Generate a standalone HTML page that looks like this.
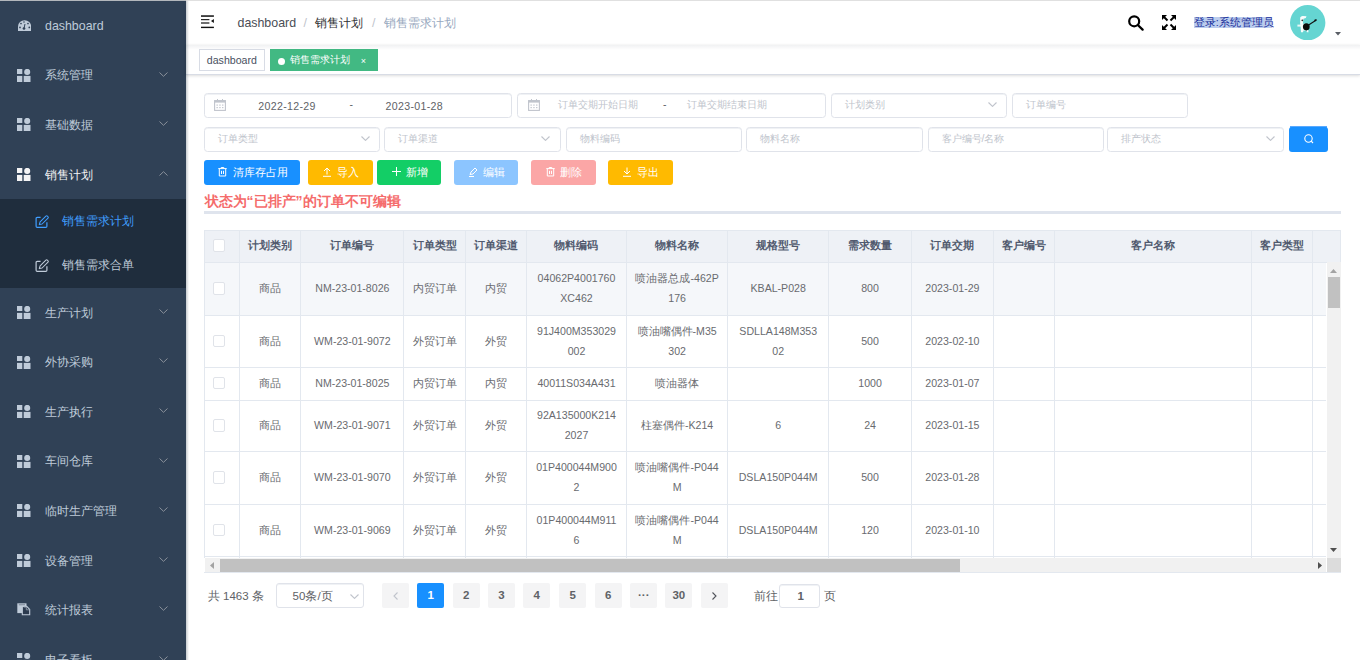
<!DOCTYPE html><html><head><meta charset="utf-8"><style>
*{box-sizing:border-box;margin:0;padding:0}
html,body{width:1360px;height:660px;overflow:hidden;background:#fff;font-family:"Liberation Sans", sans-serif;}
.abs{position:absolute}
.t{position:absolute;white-space:nowrap;line-height:1}
.sb{position:absolute;left:0;top:0;width:186px;height:660px;background:#304156;overflow:hidden}
.mi{position:absolute;left:0;width:186px}
.ico{position:absolute}
.inp{position:absolute;border:1px solid #e0e3ea;border-radius:3.5px;background:#fff;box-shadow:inset 0 1px 0 rgba(228,231,237,.55)}
.ph{position:absolute;white-space:nowrap;color:#c0c4cc;font-size:10.45px;line-height:1}
.dt{letter-spacing:.33px;font-size:10.6px}
.btn{position:absolute;border-radius:3px;color:#fff;font-size:10.6px}
.pg{position:absolute;top:583px;height:25px;width:26.8px;background:#f4f4f5;border-radius:2px;color:#606266;font-size:11.5px;font-weight:bold;text-align:center;line-height:25px}
.vl{position:absolute;width:1px;background:#e3e8ef}
.hl{position:absolute;height:1px;background:#e3e8ef}
.cell{position:absolute;display:flex;align-items:center;justify-content:center;text-align:center;color:#696b6f;font-size:10.6px;line-height:20.3px}
.hc{position:absolute;display:flex;align-items:center;justify-content:center;color:#515a6e;font-size:10.6px;font-weight:bold}
.cb{position:absolute;width:12.4px;height:12.4px;border:1px solid #e0e3e9;border-radius:2px;background:#fff}
</style></head><body>

<div class="sb">
<svg class="ico" style="left:17.5px;top:19.89px" width="13.2" height="11.4" viewBox="0 0 13.2 11.4"><path d="M0 11.3 V6.6 A6.6 6.4 0 0 1 13.2 6.6 V11.3 Z" fill="#bfcbd9"/><g fill="#304156"><circle cx="6" cy="2" r="0.75"/><circle cx="3" cy="3.5" r="0.85"/><circle cx="10" cy="3.5" r="0.85"/><circle cx="2" cy="7.4" r="0.85"/><circle cx="11.3" cy="7.4" r="0.85"/><circle cx="6" cy="8.5" r="1.35"/></g><path d="M6 8.5 L7 4" stroke="#304156" stroke-width="1"/></svg>
<div class="t" style="left:45px;top:20.29px;font-size:12.4px;color:#bfcbd9">dashboard</div>
<svg class="ico" style="left:17.3px;top:68.87px" width="14" height="13" viewBox="0 0 14 13"><rect x="0" y="0" width="5.3" height="5" fill="#bfcbd9"/><circle cx="10.2" cy="2.9" r="3.05" fill="#bfcbd9"/><rect x="0" y="6.9" width="5.3" height="6.1" fill="#bfcbd9"/><rect x="6.7" y="6.9" width="6.8" height="6.1" fill="#bfcbd9"/></svg>
<div class="t" style="left:45px;top:69.47px;font-size:12.4px;color:#bfcbd9">系统管理</div>
<svg class="ico" style="left:158.8px;top:71.57000000000001px" width="9" height="5" viewBox="0 0 9 5"><path d="M0.5 0.5 L4.5 4.3 L8.5 0.5" stroke="#8a919b" stroke-width="1" fill="none"/></svg>
<svg class="ico" style="left:17.3px;top:118.44999999999999px" width="14" height="13" viewBox="0 0 14 13"><rect x="0" y="0" width="5.3" height="5" fill="#bfcbd9"/><circle cx="10.2" cy="2.9" r="3.05" fill="#bfcbd9"/><rect x="0" y="6.9" width="5.3" height="6.1" fill="#bfcbd9"/><rect x="6.7" y="6.9" width="6.8" height="6.1" fill="#bfcbd9"/></svg>
<div class="t" style="left:45px;top:119.04999999999998px;font-size:12.4px;color:#bfcbd9">基础数据</div>
<svg class="ico" style="left:158.8px;top:121.14999999999999px" width="9" height="5" viewBox="0 0 9 5"><path d="M0.5 0.5 L4.5 4.3 L8.5 0.5" stroke="#8a919b" stroke-width="1" fill="none"/></svg>
<svg class="ico" style="left:17.3px;top:168.03px" width="14" height="13" viewBox="0 0 14 13"><rect x="0" y="0" width="5.3" height="5" fill="#f4f4f5"/><circle cx="10.2" cy="2.9" r="3.05" fill="#f4f4f5"/><rect x="0" y="6.9" width="5.3" height="6.1" fill="#f4f4f5"/><rect x="6.7" y="6.9" width="6.8" height="6.1" fill="#f4f4f5"/></svg>
<div class="t" style="left:45px;top:168.63px;font-size:12.4px;color:#f4f4f5">销售计划</div>
<svg class="ico" style="left:158.8px;top:170.73px" width="9" height="5" viewBox="0 0 9 5"><path d="M0.5 4.5 L4.5 0.7 L8.5 4.5" stroke="#8a919b" stroke-width="1" fill="none"/></svg>
<div class="abs" style="left:0;top:199.32px;width:186px;height:88.54px;background:#1f2d3d"></div>
<svg class="ico" style="left:34.5px;top:214.55499999999998px" width="14" height="14" viewBox="0 0 14 14"><path d="M5.6 2.3 H2.2 Q1.1 2.3 1.1 3.4 V11.3 Q1.1 12.4 2.2 12.4 H10.8 Q11.9 12.4 11.9 11.3 V7.3" stroke="#409eff" stroke-width="1.2" fill="none"/><path d="M4.3 9.6 L5.1 6.9 L10.9 1.1 Q11.6 0.5 12.4 1.2 L13 1.8 Q13.6 2.5 13 3.2 L7.1 9 Z" stroke="#409eff" stroke-width="1.05" fill="none" stroke-linejoin="round"/></svg>
<div class="t" style="left:62.4px;top:215.15499999999997px;font-size:12.4px;color:#409eff">销售需求计划</div>
<svg class="ico" style="left:34.5px;top:258.825px" width="14" height="14" viewBox="0 0 14 14"><path d="M5.6 2.3 H2.2 Q1.1 2.3 1.1 3.4 V11.3 Q1.1 12.4 2.2 12.4 H10.8 Q11.9 12.4 11.9 11.3 V7.3" stroke="#bfcbd9" stroke-width="1.2" fill="none"/><path d="M4.3 9.6 L5.1 6.9 L10.9 1.1 Q11.6 0.5 12.4 1.2 L13 1.8 Q13.6 2.5 13 3.2 L7.1 9 Z" stroke="#bfcbd9" stroke-width="1.05" fill="none" stroke-linejoin="round"/></svg>
<div class="t" style="left:62.4px;top:259.42499999999995px;font-size:12.4px;color:#bfcbd9">销售需求合单</div>
<svg class="ico" style="left:17.3px;top:306.15000000000003px" width="14" height="13" viewBox="0 0 14 13"><rect x="0" y="0" width="5.3" height="5" fill="#bfcbd9"/><circle cx="10.2" cy="2.9" r="3.05" fill="#bfcbd9"/><rect x="0" y="6.9" width="5.3" height="6.1" fill="#bfcbd9"/><rect x="6.7" y="6.9" width="6.8" height="6.1" fill="#bfcbd9"/></svg>
<div class="t" style="left:45px;top:306.75000000000006px;font-size:12.4px;color:#bfcbd9">生产计划</div>
<svg class="ico" style="left:158.8px;top:308.85px" width="9" height="5" viewBox="0 0 9 5"><path d="M0.5 0.5 L4.5 4.3 L8.5 0.5" stroke="#8a919b" stroke-width="1" fill="none"/></svg>
<svg class="ico" style="left:17.3px;top:355.73px" width="14" height="13" viewBox="0 0 14 13"><rect x="0" y="0" width="5.3" height="5" fill="#bfcbd9"/><circle cx="10.2" cy="2.9" r="3.05" fill="#bfcbd9"/><rect x="0" y="6.9" width="5.3" height="6.1" fill="#bfcbd9"/><rect x="6.7" y="6.9" width="6.8" height="6.1" fill="#bfcbd9"/></svg>
<div class="t" style="left:45px;top:356.33000000000004px;font-size:12.4px;color:#bfcbd9">外协采购</div>
<svg class="ico" style="left:158.8px;top:358.43px" width="9" height="5" viewBox="0 0 9 5"><path d="M0.5 0.5 L4.5 4.3 L8.5 0.5" stroke="#8a919b" stroke-width="1" fill="none"/></svg>
<svg class="ico" style="left:17.3px;top:405.31px" width="14" height="13" viewBox="0 0 14 13"><rect x="0" y="0" width="5.3" height="5" fill="#bfcbd9"/><circle cx="10.2" cy="2.9" r="3.05" fill="#bfcbd9"/><rect x="0" y="6.9" width="5.3" height="6.1" fill="#bfcbd9"/><rect x="6.7" y="6.9" width="6.8" height="6.1" fill="#bfcbd9"/></svg>
<div class="t" style="left:45px;top:405.91px;font-size:12.4px;color:#bfcbd9">生产执行</div>
<svg class="ico" style="left:158.8px;top:408.01px" width="9" height="5" viewBox="0 0 9 5"><path d="M0.5 0.5 L4.5 4.3 L8.5 0.5" stroke="#8a919b" stroke-width="1" fill="none"/></svg>
<svg class="ico" style="left:17.3px;top:454.89px" width="14" height="13" viewBox="0 0 14 13"><rect x="0" y="0" width="5.3" height="5" fill="#bfcbd9"/><circle cx="10.2" cy="2.9" r="3.05" fill="#bfcbd9"/><rect x="0" y="6.9" width="5.3" height="6.1" fill="#bfcbd9"/><rect x="6.7" y="6.9" width="6.8" height="6.1" fill="#bfcbd9"/></svg>
<div class="t" style="left:45px;top:455.49px;font-size:12.4px;color:#bfcbd9">车间仓库</div>
<svg class="ico" style="left:158.8px;top:457.59px" width="9" height="5" viewBox="0 0 9 5"><path d="M0.5 0.5 L4.5 4.3 L8.5 0.5" stroke="#8a919b" stroke-width="1" fill="none"/></svg>
<svg class="ico" style="left:17.3px;top:504.46999999999997px" width="14" height="13" viewBox="0 0 14 13"><rect x="0" y="0" width="5.3" height="5" fill="#bfcbd9"/><circle cx="10.2" cy="2.9" r="3.05" fill="#bfcbd9"/><rect x="0" y="6.9" width="5.3" height="6.1" fill="#bfcbd9"/><rect x="6.7" y="6.9" width="6.8" height="6.1" fill="#bfcbd9"/></svg>
<div class="t" style="left:45px;top:505.07px;font-size:12.4px;color:#bfcbd9">临时生产管理</div>
<svg class="ico" style="left:158.8px;top:507.16999999999996px" width="9" height="5" viewBox="0 0 9 5"><path d="M0.5 0.5 L4.5 4.3 L8.5 0.5" stroke="#8a919b" stroke-width="1" fill="none"/></svg>
<svg class="ico" style="left:17.3px;top:554.05px" width="14" height="13" viewBox="0 0 14 13"><rect x="0" y="0" width="5.3" height="5" fill="#bfcbd9"/><circle cx="10.2" cy="2.9" r="3.05" fill="#bfcbd9"/><rect x="0" y="6.9" width="5.3" height="6.1" fill="#bfcbd9"/><rect x="6.7" y="6.9" width="6.8" height="6.1" fill="#bfcbd9"/></svg>
<div class="t" style="left:45px;top:554.65px;font-size:12.4px;color:#bfcbd9">设备管理</div>
<svg class="ico" style="left:158.8px;top:556.75px" width="9" height="5" viewBox="0 0 9 5"><path d="M0.5 0.5 L4.5 4.3 L8.5 0.5" stroke="#8a919b" stroke-width="1" fill="none"/></svg>
<svg class="ico" style="left:17.3px;top:603.13px" width="14" height="13" viewBox="0 0 14 13"><rect x="0.3" y="0.3" width="9.2" height="9.8" fill="#bfcbd9"/><rect x="1.8" y="0.9" width="6.2" height="1.5" fill="#8e9aa9"/><path d="M5.3 3.4 H9.7 L12.7 6.4 V11.8 H5.3 Z" fill="#2b3a4f" stroke="#bfcbd9" stroke-width="1.1"/><path d="M6.7 4.1 H9.3 V6.8 H12.2" stroke="#8e9aa9" stroke-width="0.9" fill="none"/></svg>
<div class="t" style="left:45px;top:604.23px;font-size:12.4px;color:#bfcbd9">统计报表</div>
<svg class="ico" style="left:158.8px;top:606.33px" width="9" height="5" viewBox="0 0 9 5"><path d="M0.5 0.5 L4.5 4.3 L8.5 0.5" stroke="#8a919b" stroke-width="1" fill="none"/></svg>
<svg class="ico" style="left:17.3px;top:653.21px" width="14" height="13" viewBox="0 0 14 13"><rect x="0" y="0" width="5.3" height="5" fill="#bfcbd9"/><circle cx="10.2" cy="2.9" r="3.05" fill="#bfcbd9"/><rect x="0" y="6.9" width="5.3" height="6.1" fill="#bfcbd9"/><rect x="6.7" y="6.9" width="6.8" height="6.1" fill="#bfcbd9"/></svg>
<div class="t" style="left:45px;top:653.8100000000001px;font-size:12.4px;color:#bfcbd9">电子看板</div>
<svg class="ico" style="left:158.8px;top:655.9100000000001px" width="9" height="5" viewBox="0 0 9 5"><path d="M0.5 0.5 L4.5 4.3 L8.5 0.5" stroke="#8a919b" stroke-width="1" fill="none"/></svg>
</div>
<div class="abs" style="left:186px;top:1px;width:1174px;height:44.3px;background:#fff;box-shadow:0 1px 4px rgba(0,21,41,.08)"></div>
<svg class="ico" style="left:201.1px;top:15px" width="13" height="13.5" viewBox="0 0 13 13.5"><g fill="#111"><rect x="0" y="0.3" width="12.9" height="1.5"/><rect x="0" y="4.1" width="8.4" height="1.1"/><rect x="0" y="7.4" width="8.4" height="1.2"/><path d="M12.9 4 L10 6 L12.9 8Z"/><rect x="0" y="11.7" width="12.9" height="1.4"/></g></svg>
<div class="t" style="left:237.5px;top:17.3px;font-size:12.4px;color:#4a4d55">dashboard</div>
<div class="t" style="left:303.5px;top:17px;font-size:12.4px;color:#c0c4cc">/</div>
<div class="t" style="left:315.1px;top:16.8px;font-size:12.4px;color:#303133">销售计划</div>
<div class="t" style="left:372px;top:17px;font-size:12.4px;color:#c0c4cc">/</div>
<div class="t" style="left:383.6px;top:16.8px;font-size:12.4px;color:#97a8be">销售需求计划</div>
<svg class="ico" style="left:1128px;top:15px" width="17" height="16" viewBox="0 0 17 16"><circle cx="6.2" cy="6.3" r="5" stroke="#000" stroke-width="2.2" fill="none"/><path d="M9.8 10 L14.6 14.6" stroke="#000" stroke-width="2.3" stroke-linecap="round"/></svg>
<svg class="ico" style="left:1161.8px;top:15.3px" width="14" height="15" viewBox="0 0 14 15"><g fill="#000" stroke="#000"><path d="M0 0 H5 L0 5Z" stroke="none"/><path d="M1.5 1.5 L5.5 5.5" stroke-width="2" /><path d="M14 0 H9 L14 5Z" stroke="none"/><path d="M12.5 1.5 L8.5 5.5" stroke-width="2"/><path d="M0 15 H5 L0 10Z" stroke="none"/><path d="M1.5 13.5 L5.5 9.5" stroke-width="2"/><path d="M14 15 H9 L14 10Z" stroke="none"/><path d="M12.5 13.5 L8.5 9.5" stroke-width="2"/></g></svg>
<div class="abs" style="left:1193.8px;top:17px;width:78px;height:11px;background:#bccdee"></div>
<div class="t" style="left:1193.8px;top:17px;font-size:10.6px;color:#1a2f9a">登录:系统管理员</div>
<svg class="ico" style="left:1290.4px;top:4.5px" width="35.4" height="35.4" viewBox="0 0 35.4 35.4"><circle cx="17.7" cy="17.7" r="17.7" fill="#65d5d2"/>
<path d="M10.2 12.5 Q11 10.8 13 11 L16.5 11.2 L15.8 13 L13.5 13.8 L13.2 15.5 L12.8 19.5 L10.2 19.8 Z" fill="#f7fcfc"/>
<path d="M7.4 19.6 H12.5 V21.6 H7.4Z" fill="#e8f7f7"/>
<path d="M10.5 19.5 L15 18.5 L17.5 22 L16 25.5 L13.5 25.5 L13 27.3 L11 27.3 L10.8 24.5 Z" fill="#f7fcfc"/>
<path d="M16.5 25 L18.3 25 L18.5 27.3 L16.8 27.3Z" fill="#f7fcfc"/>
<circle cx="12.3" cy="15.3" r="0.9" fill="#333"/>
<ellipse cx="16.3" cy="21.8" rx="3.4" ry="3.6" fill="#0a0a0a"/><path d="M18.2 20.3 L26 15.2" stroke="#111" stroke-width="1.1"/><path d="M24.5 15.8 L26.6 14.6" stroke="#111" stroke-width="1.6"/></svg>
<svg class="ico" style="left:1335px;top:32px" width="6" height="3.5" viewBox="0 0 6 3.5"><path d="M0 0 H6 L3 3.5Z" fill="#5a5e66"/></svg>
<div class="abs" style="left:186px;top:45.3px;width:1174px;height:29.9px;background:#fff;border-bottom:1px solid #d8dce5;box-shadow:0 1px 3px 0 rgba(0,0,0,.12),0 0 3px 0 rgba(0,0,0,.04)"></div>
<div class="abs" style="left:199.3px;top:49px;width:65.5px;height:22.3px;border:1px solid #d8dce5;background:#fff"></div>
<div class="t" style="left:206.8px;top:55.2px;font-size:10.6px;color:#495060">dashboard</div>
<div class="abs" style="left:270px;top:49px;width:108px;height:22.3px;background:#42b983;border:1px solid #42b983"></div>
<div class="abs" style="left:277.5px;top:57.5px;width:7.2px;height:7.2px;border-radius:50%;background:#fff"></div>
<div class="t" style="left:289.6px;top:55.3px;font-size:10.3px;color:#fff">销售需求计划</div>
<div class="t" style="left:360.8px;top:57px;font-size:9px;color:#fff">×</div>
<div class="inp" style="left:204.2px;top:92.5px;width:308.3px;height:25.200000000000003px"></div>
<svg class="ico" style="left:213.8px;top:99px" width="12" height="12" viewBox="0 0 12 12"><rect x="0.6" y="1.6" width="10.8" height="9.8" stroke="#c0c4cc" stroke-width="1.1" fill="none"/><rect x="0.6" y="1.6" width="10.8" height="2" fill="#c0c4cc"/><g fill="#c0c4cc"><rect x="2.5" y="5.5" width="1.3" height="1.2"/><rect x="5.3" y="5.5" width="1.3" height="1.2"/><rect x="8.1" y="5.5" width="1.3" height="1.2"/><rect x="2.5" y="8" width="1.3" height="1.2"/><rect x="5.3" y="8" width="1.3" height="1.2"/><rect x="8.1" y="8" width="1.3" height="1.2"/></g><rect x="3" y="0" width="1" height="2.5" fill="#c0c4cc"/><rect x="8" y="0" width="1" height="2.5" fill="#c0c4cc"/></svg>
<div class="ph dt" style="left:258.3px;top:100.6px;color:#606266">2022-12-29</div>
<div class="ph" style="left:349.5px;top:100.4px;color:#606266">-</div>
<div class="ph dt" style="left:385.5px;top:100.6px;color:#606266">2023-01-28</div>
<div class="inp" style="left:517.2px;top:92.5px;width:308.79999999999995px;height:25.200000000000003px"></div>
<svg class="ico" style="left:528.4px;top:99px" width="12" height="12" viewBox="0 0 12 12"><rect x="0.6" y="1.6" width="10.8" height="9.8" stroke="#c0c4cc" stroke-width="1.1" fill="none"/><rect x="0.6" y="1.6" width="10.8" height="2" fill="#c0c4cc"/><g fill="#c0c4cc"><rect x="2.5" y="5.5" width="1.3" height="1.2"/><rect x="5.3" y="5.5" width="1.3" height="1.2"/><rect x="8.1" y="5.5" width="1.3" height="1.2"/><rect x="2.5" y="8" width="1.3" height="1.2"/><rect x="5.3" y="8" width="1.3" height="1.2"/><rect x="8.1" y="8" width="1.3" height="1.2"/></g><rect x="3" y="0" width="1" height="2.5" fill="#c0c4cc"/><rect x="8" y="0" width="1" height="2.5" fill="#c0c4cc"/></svg>
<div class="ph" style="left:558px;top:99.6px;color:#c0c4cc">订单交期开始日期</div>
<div class="ph" style="left:663px;top:99.6px;color:#606266">-</div>
<div class="ph" style="left:686.6px;top:99.6px;color:#c0c4cc">订单交期结束日期</div>
<div class="inp" style="left:830.8px;top:92.5px;width:176.70000000000005px;height:25.200000000000003px"></div>
<div class="ph" style="left:844.5px;top:99.6px;color:#c0c4cc">计划类别</div>
<svg class="ico" style="left:988px;top:102.3px" width="9" height="5" viewBox="0 0 9 5"><path d="M0.5 0.5 L4.5 4.4 L8.5 0.5" stroke="#c0c4cc" stroke-width="1.1" fill="none"/></svg>
<div class="inp" style="left:1011.9px;top:92.5px;width:175.89999999999998px;height:25.200000000000003px"></div>
<div class="ph" style="left:1026px;top:99.6px;color:#c0c4cc">订单编号</div>
<div class="inp" style="left:204px;top:126.5px;width:176.39999999999998px;height:25.099999999999994px"></div>
<div class="ph" style="left:218px;top:133.5px;color:#c0c4cc">订单类型</div>
<svg class="ico" style="left:360.8px;top:136.3px" width="9" height="5" viewBox="0 0 9 5"><path d="M0.5 0.5 L4.5 4.4 L8.5 0.5" stroke="#c0c4cc" stroke-width="1.1" fill="none"/></svg>
<div class="inp" style="left:384.4px;top:126.5px;width:176.80000000000007px;height:25.099999999999994px"></div>
<div class="ph" style="left:398.4px;top:133.5px;color:#c0c4cc">订单渠道</div>
<svg class="ico" style="left:541.2px;top:136.3px" width="9" height="5" viewBox="0 0 9 5"><path d="M0.5 0.5 L4.5 4.4 L8.5 0.5" stroke="#c0c4cc" stroke-width="1.1" fill="none"/></svg>
<div class="inp" style="left:565.7px;top:126.5px;width:176.19999999999993px;height:25.099999999999994px"></div>
<div class="ph" style="left:579.7px;top:133.5px;color:#c0c4cc">物料编码</div>
<div class="inp" style="left:745.8px;top:126.5px;width:176.9000000000001px;height:25.099999999999994px"></div>
<div class="ph" style="left:759.6px;top:133.5px;color:#c0c4cc">物料名称</div>
<div class="inp" style="left:927.7px;top:126.5px;width:175.89999999999986px;height:25.099999999999994px"></div>
<div class="ph" style="left:941.6px;top:133.5px;color:#c0c4cc">客户编号/名称</div>
<div class="inp" style="left:1107.3px;top:126.5px;width:177.0px;height:25.099999999999994px"></div>
<div class="ph" style="left:1121.3px;top:133.5px;color:#c0c4cc">排产状态</div>
<svg class="ico" style="left:1266px;top:136.3px" width="9" height="5" viewBox="0 0 9 5"><path d="M0.5 0.5 L4.5 4.4 L8.5 0.5" stroke="#c0c4cc" stroke-width="1.1" fill="none"/></svg>
<div class="abs" style="left:1290px;top:126.1px;width:36.8px;height:1.6px;background:#59a9ff"></div>
<div class="abs" style="left:1289.1px;top:127.2px;width:38.5px;height:24.4px;background:#1890ff;border-radius:3px"></div>
<svg class="ico" style="left:1303.5px;top:133.5px" width="10" height="10" viewBox="0 0 10 10"><circle cx="4.5" cy="4.5" r="3.7" stroke="#fff" stroke-width="1.1" fill="none"/><path d="M7.2 7.2 L9 9" stroke="#fff" stroke-width="1.1"/></svg>
<div class="btn" style="left:204.2px;top:159.7px;width:95.60000000000002px;height:25.5px;background:#1890ff"></div>
<svg class="ico" style="left:217.8px;top:167.3px" width="9" height="9.6" viewBox="0 0 9 9.6"><path d="M0.3 1.6 H8.7 M3.2 1.6 V0.5 H5.8 V1.6 M1.3 1.6 V9 H7.7 V1.6 M3.5 3.8 V7 M5.5 3.8 V7" stroke="#fff" stroke-width="1" fill="none"/></svg>
<div class="t" style="left:233.3px;top:166.8px;font-size:10.6px;color:#fff">清库存占用</div>
<div class="btn" style="left:308.3px;top:159.7px;width:64.39999999999998px;height:25.5px;background:#ffba00"></div>
<svg class="ico" style="left:323.3px;top:166.5px" width="8" height="10" viewBox="0 0 8 10"><path d="M0 9.3 H8 M4 7.5 V1 M1 4 L4 1 L7 4" stroke="#fff" stroke-width="1" fill="none"/></svg>
<div class="t" style="left:337.4px;top:166.8px;font-size:10.6px;color:#fff">导入</div>
<div class="btn" style="left:376.8px;top:159.7px;width:63.80000000000001px;height:25.5px;background:#13ce66"></div>
<svg class="ico" style="left:391.6px;top:167px" width="9" height="9" viewBox="0 0 9 9"><path d="M4.5 0 V9 M0 4.5 H9" stroke="#fff" stroke-width="1" fill="none"/></svg>
<div class="t" style="left:406.2px;top:166.8px;font-size:10.6px;color:#fff">新增</div>
<div class="btn" style="left:453.5px;top:159.7px;width:64.29999999999995px;height:25.5px;background:#8cc5ff"></div>
<svg class="ico" style="left:468.9px;top:166.5px" width="9" height="10" viewBox="0 0 9 10"><path d="M1 7.5 L2 5 L6 1 L8 3 L4 7 Z M0 9.5 H5" stroke="#fff" stroke-width="1" fill="none"/></svg>
<div class="t" style="left:483px;top:166.8px;font-size:10.6px;color:#fff">编辑</div>
<div class="btn" style="left:531.2px;top:159.7px;width:64.69999999999993px;height:25.5px;background:#fba6a6"></div>
<svg class="ico" style="left:545.5px;top:167.3px" width="9" height="9.6" viewBox="0 0 9 9.6"><path d="M0.3 1.6 H8.7 M3.2 1.6 V0.5 H5.8 V1.6 M1.3 1.6 V9 H7.7 V1.6 M3.5 3.8 V7 M5.5 3.8 V7" stroke="#fff" stroke-width="1" fill="none"/></svg>
<div class="t" style="left:560.3px;top:166.8px;font-size:10.6px;color:#fff">删除</div>
<div class="btn" style="left:608.3px;top:159.7px;width:64.40000000000009px;height:25.5px;background:#ffba00"></div>
<svg class="ico" style="left:623.3px;top:166.5px" width="8" height="10" viewBox="0 0 8 10"><path d="M0 9.3 H8 M4 0.5 V7 M1 4 L4 7 L7 4" stroke="#fff" stroke-width="1" fill="none"/></svg>
<div class="t" style="left:637.4px;top:166.8px;font-size:10.6px;color:#fff">导出</div>
<div class="t" style="left:204.5px;top:193.6px;font-size:14px;font-weight:bold;color:#f56c6c">状态为“已排产”的订单不可编辑</div>
<div class="abs" style="left:204px;top:211px;width:1137px;height:3px;background:#dfe4ed"></div>
<div class="abs" style="left:204.1px;top:230.1px;width:1136.7px;height:32.29999999999998px;background:#eef1f6"></div>
<div class="abs" style="left:204.1px;top:262.4px;width:1122.4px;height:53.10000000000002px;background:#f5f7fa"></div>
<div class="hl" style="left:204.1px;top:230.1px;width:1136.7px"></div>
<div class="hl" style="left:204.1px;top:261.9px;width:1136.7px"></div>
<div class="hl" style="left:204.1px;top:315.0px;width:1122.4px"></div>
<div class="hl" style="left:204.1px;top:366.8px;width:1122.4px"></div>
<div class="hl" style="left:204.1px;top:399.5px;width:1122.4px"></div>
<div class="hl" style="left:204.1px;top:451.3px;width:1122.4px"></div>
<div class="hl" style="left:204.1px;top:503.7px;width:1122.4px"></div>
<div class="hl" style="left:204.1px;top:556.0px;width:1122.4px"></div>
<div class="vl" style="left:203.6px;top:230.1px;height:327.9px"></div>
<div class="vl" style="left:239.0px;top:230.1px;height:327.9px"></div>
<div class="vl" style="left:300.4px;top:230.1px;height:327.9px"></div>
<div class="vl" style="left:403.3px;top:230.1px;height:327.9px"></div>
<div class="vl" style="left:464.8px;top:230.1px;height:327.9px"></div>
<div class="vl" style="left:525.8px;top:230.1px;height:327.9px"></div>
<div class="vl" style="left:626.2px;top:230.1px;height:327.9px"></div>
<div class="vl" style="left:727.1px;top:230.1px;height:327.9px"></div>
<div class="vl" style="left:828.3px;top:230.1px;height:327.9px"></div>
<div class="vl" style="left:910.8px;top:230.1px;height:327.9px"></div>
<div class="vl" style="left:993.0px;top:230.1px;height:327.9px"></div>
<div class="vl" style="left:1053.7px;top:230.1px;height:327.9px"></div>
<div class="vl" style="left:1251.4px;top:230.1px;height:327.9px"></div>
<div class="vl" style="left:1312.0px;top:230.1px;height:327.9px"></div>
<div class="vl" style="left:1339.8px;top:230.1px;height:342.4px"></div>
<div class="hl" style="left:204.1px;top:572px;width:1136.7px"></div>
<div class="hc" style="left:239.5px;top:230.1px;width:61.39999999999998px;height:32.29999999999998px">计划类别</div>
<div class="hc" style="left:300.9px;top:230.1px;width:102.90000000000003px;height:32.29999999999998px">订单编号</div>
<div class="hc" style="left:403.8px;top:230.1px;width:61.5px;height:32.29999999999998px">订单类型</div>
<div class="hc" style="left:465.3px;top:230.1px;width:60.99999999999994px;height:32.29999999999998px">订单渠道</div>
<div class="hc" style="left:526.3px;top:230.1px;width:100.40000000000009px;height:32.29999999999998px">物料编码</div>
<div class="hc" style="left:626.7px;top:230.1px;width:100.89999999999998px;height:32.29999999999998px">物料名称</div>
<div class="hc" style="left:727.6px;top:230.1px;width:101.19999999999993px;height:32.29999999999998px">规格型号</div>
<div class="hc" style="left:828.8px;top:230.1px;width:82.5px;height:32.29999999999998px">需求数量</div>
<div class="hc" style="left:911.3px;top:230.1px;width:82.20000000000005px;height:32.29999999999998px">订单交期</div>
<div class="hc" style="left:993.5px;top:230.1px;width:60.700000000000045px;height:32.29999999999998px">客户编号</div>
<div class="hc" style="left:1054.2px;top:230.1px;width:197.70000000000005px;height:32.29999999999998px">客户名称</div>
<div class="hc" style="left:1251.9px;top:230.1px;width:60.59999999999991px;height:32.29999999999998px">客户类型</div>
<div class="cb" style="left:212.8px;top:239.4px"></div>
<div class="cb" style="left:212.8px;top:282.25px"></div>
<div class="cell" style="left:239.5px;top:262.4px;width:61.39999999999998px;height:52.10000000000002px">商品</div>
<div class="cell" style="left:300.9px;top:262.4px;width:102.90000000000003px;height:52.10000000000002px">NM-23-01-8026</div>
<div class="cell" style="left:403.8px;top:262.4px;width:61.5px;height:52.10000000000002px">内贸订单</div>
<div class="cell" style="left:465.3px;top:262.4px;width:60.99999999999994px;height:52.10000000000002px">内贸</div>
<div class="cell" style="left:526.3px;top:262.4px;width:100.40000000000009px;height:52.10000000000002px">04062P4001760<br>XC462</div>
<div class="cell" style="left:626.7px;top:262.4px;width:100.89999999999998px;height:52.10000000000002px">喷油器总成-462P<br>176</div>
<div class="cell" style="left:727.6px;top:262.4px;width:101.19999999999993px;height:52.10000000000002px">KBAL-P028</div>
<div class="cell" style="left:828.8px;top:262.4px;width:82.5px;height:52.10000000000002px">800</div>
<div class="cell" style="left:911.3px;top:262.4px;width:82.20000000000005px;height:52.10000000000002px">2023-01-29</div>
<div class="cb" style="left:212.8px;top:334.7px"></div>
<div class="cell" style="left:239.5px;top:315.5px;width:61.39999999999998px;height:50.80000000000001px">商品</div>
<div class="cell" style="left:300.9px;top:315.5px;width:102.90000000000003px;height:50.80000000000001px">WM-23-01-9072</div>
<div class="cell" style="left:403.8px;top:315.5px;width:61.5px;height:50.80000000000001px">外贸订单</div>
<div class="cell" style="left:465.3px;top:315.5px;width:60.99999999999994px;height:50.80000000000001px">外贸</div>
<div class="cell" style="left:526.3px;top:315.5px;width:100.40000000000009px;height:50.80000000000001px">91J400M353029<br>002</div>
<div class="cell" style="left:626.7px;top:315.5px;width:100.89999999999998px;height:50.80000000000001px">喷油嘴偶件-M35<br>302</div>
<div class="cell" style="left:727.6px;top:315.5px;width:101.19999999999993px;height:50.80000000000001px">SDLLA148M353<br>02</div>
<div class="cell" style="left:828.8px;top:315.5px;width:82.5px;height:50.80000000000001px">500</div>
<div class="cell" style="left:911.3px;top:315.5px;width:82.20000000000005px;height:50.80000000000001px">2023-02-10</div>
<div class="cb" style="left:212.8px;top:376.95px"></div>
<div class="cell" style="left:239.5px;top:367.3px;width:61.39999999999998px;height:31.69999999999999px">商品</div>
<div class="cell" style="left:300.9px;top:367.3px;width:102.90000000000003px;height:31.69999999999999px">NM-23-01-8025</div>
<div class="cell" style="left:403.8px;top:367.3px;width:61.5px;height:31.69999999999999px">内贸订单</div>
<div class="cell" style="left:465.3px;top:367.3px;width:60.99999999999994px;height:31.69999999999999px">内贸</div>
<div class="cell" style="left:526.3px;top:367.3px;width:100.40000000000009px;height:31.69999999999999px">40011S034A431</div>
<div class="cell" style="left:626.7px;top:367.3px;width:100.89999999999998px;height:31.69999999999999px">喷油器体</div>
<div class="cell" style="left:828.8px;top:367.3px;width:82.5px;height:31.69999999999999px">1000</div>
<div class="cell" style="left:911.3px;top:367.3px;width:82.20000000000005px;height:31.69999999999999px">2023-01-07</div>
<div class="cb" style="left:212.8px;top:419.2px"></div>
<div class="cell" style="left:239.5px;top:400.0px;width:61.39999999999998px;height:50.80000000000001px">商品</div>
<div class="cell" style="left:300.9px;top:400.0px;width:102.90000000000003px;height:50.80000000000001px">WM-23-01-9071</div>
<div class="cell" style="left:403.8px;top:400.0px;width:61.5px;height:50.80000000000001px">外贸订单</div>
<div class="cell" style="left:465.3px;top:400.0px;width:60.99999999999994px;height:50.80000000000001px">外贸</div>
<div class="cell" style="left:526.3px;top:400.0px;width:100.40000000000009px;height:50.80000000000001px">92A135000K214<br>2027</div>
<div class="cell" style="left:626.7px;top:400.0px;width:100.89999999999998px;height:50.80000000000001px">柱塞偶件-K214</div>
<div class="cell" style="left:727.6px;top:400.0px;width:101.19999999999993px;height:50.80000000000001px">6</div>
<div class="cell" style="left:828.8px;top:400.0px;width:82.5px;height:50.80000000000001px">24</div>
<div class="cell" style="left:911.3px;top:400.0px;width:82.20000000000005px;height:50.80000000000001px">2023-01-15</div>
<div class="cb" style="left:212.8px;top:471.3px"></div>
<div class="cell" style="left:239.5px;top:451.8px;width:61.39999999999998px;height:51.39999999999998px">商品</div>
<div class="cell" style="left:300.9px;top:451.8px;width:102.90000000000003px;height:51.39999999999998px">WM-23-01-9070</div>
<div class="cell" style="left:403.8px;top:451.8px;width:61.5px;height:51.39999999999998px">外贸订单</div>
<div class="cell" style="left:465.3px;top:451.8px;width:60.99999999999994px;height:51.39999999999998px">外贸</div>
<div class="cell" style="left:526.3px;top:451.8px;width:100.40000000000009px;height:51.39999999999998px">01P400044M900<br>2</div>
<div class="cell" style="left:626.7px;top:451.8px;width:100.89999999999998px;height:51.39999999999998px">喷油嘴偶件-P044<br>M</div>
<div class="cell" style="left:727.6px;top:451.8px;width:101.19999999999993px;height:51.39999999999998px">DSLA150P044M</div>
<div class="cell" style="left:828.8px;top:451.8px;width:82.5px;height:51.39999999999998px">500</div>
<div class="cell" style="left:911.3px;top:451.8px;width:82.20000000000005px;height:51.39999999999998px">2023-01-28</div>
<div class="cb" style="left:212.8px;top:523.65px"></div>
<div class="cell" style="left:239.5px;top:504.2px;width:61.39999999999998px;height:51.30000000000001px">商品</div>
<div class="cell" style="left:300.9px;top:504.2px;width:102.90000000000003px;height:51.30000000000001px">WM-23-01-9069</div>
<div class="cell" style="left:403.8px;top:504.2px;width:61.5px;height:51.30000000000001px">外贸订单</div>
<div class="cell" style="left:465.3px;top:504.2px;width:60.99999999999994px;height:51.30000000000001px">外贸</div>
<div class="cell" style="left:526.3px;top:504.2px;width:100.40000000000009px;height:51.30000000000001px">01P400044M911<br>6</div>
<div class="cell" style="left:626.7px;top:504.2px;width:100.89999999999998px;height:51.30000000000001px">喷油嘴偶件-P044<br>M</div>
<div class="cell" style="left:727.6px;top:504.2px;width:101.19999999999993px;height:51.30000000000001px">DSLA150P044M</div>
<div class="cell" style="left:828.8px;top:504.2px;width:82.5px;height:51.30000000000001px">120</div>
<div class="cell" style="left:911.3px;top:504.2px;width:82.20000000000005px;height:51.30000000000001px">2023-01-10</div>
<div class="abs" style="left:1326.5px;top:262.4px;width:14px;height:295.6px;background:#f1f1f1"></div>
<div class="abs" style="left:1328px;top:277.2px;width:11.5px;height:30.7px;background:#c1c1c1"></div>
<svg class="ico" style="left:1330px;top:268.5px" width="7" height="4" viewBox="0 0 7 4"><path d="M0 4 L3.5 0 L7 4Z" fill="#a3a3a3"/></svg>
<svg class="ico" style="left:1330px;top:547.5px" width="7" height="4" viewBox="0 0 7 4"><path d="M0 0 L3.5 4 L7 0Z" fill="#505050"/></svg>
<div class="abs" style="left:204.7px;top:558.2px;width:1121.8px;height:13.8px;background:#f1f1f1"></div>
<div class="abs" style="left:1326.5px;top:558.2px;width:14px;height:13.8px;background:#dcdcdc"></div>
<div class="abs" style="left:220px;top:559.4px;width:739.5px;height:12.4px;background:#c1c1c1"></div>
<svg class="ico" style="left:210px;top:562px" width="4" height="7" viewBox="0 0 4 7"><path d="M4 0 L0 3.5 L4 7Z" fill="#a3a3a3"/></svg>
<svg class="ico" style="left:1317.5px;top:562px" width="4" height="7" viewBox="0 0 4 7"><path d="M0 0 L4 3.5 L0 7Z" fill="#505050"/></svg>
<div class="t" style="left:207.8px;top:591.3px;font-size:11.5px;color:#606266">共 1463 条</div>
<div class="inp" style="left:276.2px;top:583.2px;width:87.9px;height:25.2px;border-radius:3px"></div>
<div class="t" style="left:292.6px;top:591.2px;font-size:11.5px;color:#606266">50条/页</div>
<svg class="ico" style="left:350px;top:593.5px" width="9" height="5" viewBox="0 0 9 5"><path d="M0.5 0.5 L4.5 4.4 L8.5 0.5" stroke="#c0c4cc" stroke-width="1.1" fill="none"/></svg>
<div class="pg" style="left:382.2px;color:#c0c4cc"></div>
<svg class="ico" style="left:393px;top:591.5px" width="5" height="8" viewBox="0 0 5 8"><path d="M4.5 0.5 L1 4 L4.5 7.5" stroke="#c0c4cc" stroke-width="1.1" fill="none"/></svg>
<div class="pg" style="left:417.2px;background:#1890ff;color:#fff;">1</div>
<div class="pg" style="left:452.8px;">2</div>
<div class="pg" style="left:488px;">3</div>
<div class="pg" style="left:523.4px;">4</div>
<div class="pg" style="left:559.4px;">5</div>
<div class="pg" style="left:594.8px;">6</div>
<div class="pg" style="left:630.4px;">···</div>
<div class="pg" style="left:665.4px;">30</div>
<div class="pg" style="left:701px"></div>
<svg class="ico" style="left:711.5px;top:591.5px" width="5" height="8" viewBox="0 0 5 8"><path d="M0.5 0.5 L4 4 L0.5 7.5" stroke="#50535a" stroke-width="1.1" fill="none"/></svg>
<div class="t" style="left:753.5px;top:591.2px;font-size:11.5px;color:#606266">前往</div>
<div class="inp" style="left:779.4px;top:583.5px;width:41px;height:24.5px;border-radius:3px"></div>
<div class="t" style="left:797.5px;top:591px;font-size:11.5px;color:#606266;font-weight:bold">1</div>
<div class="t" style="left:824.1px;top:591.2px;font-size:11.5px;color:#606266">页</div>
<div class="abs" style="left:186px;top:44.7px;width:1174px;height:5px;background:linear-gradient(rgba(0,21,41,.06),rgba(0,21,41,0))"></div>
<div class="abs" style="left:186px;top:0;width:3px;height:660px;background:linear-gradient(90deg,rgba(0,21,41,.22),rgba(0,21,41,0))"></div>
<div class="abs" style="left:0;top:0;width:1360px;height:1px;background:rgba(217,217,217,0.78)"></div>
</body></html>
